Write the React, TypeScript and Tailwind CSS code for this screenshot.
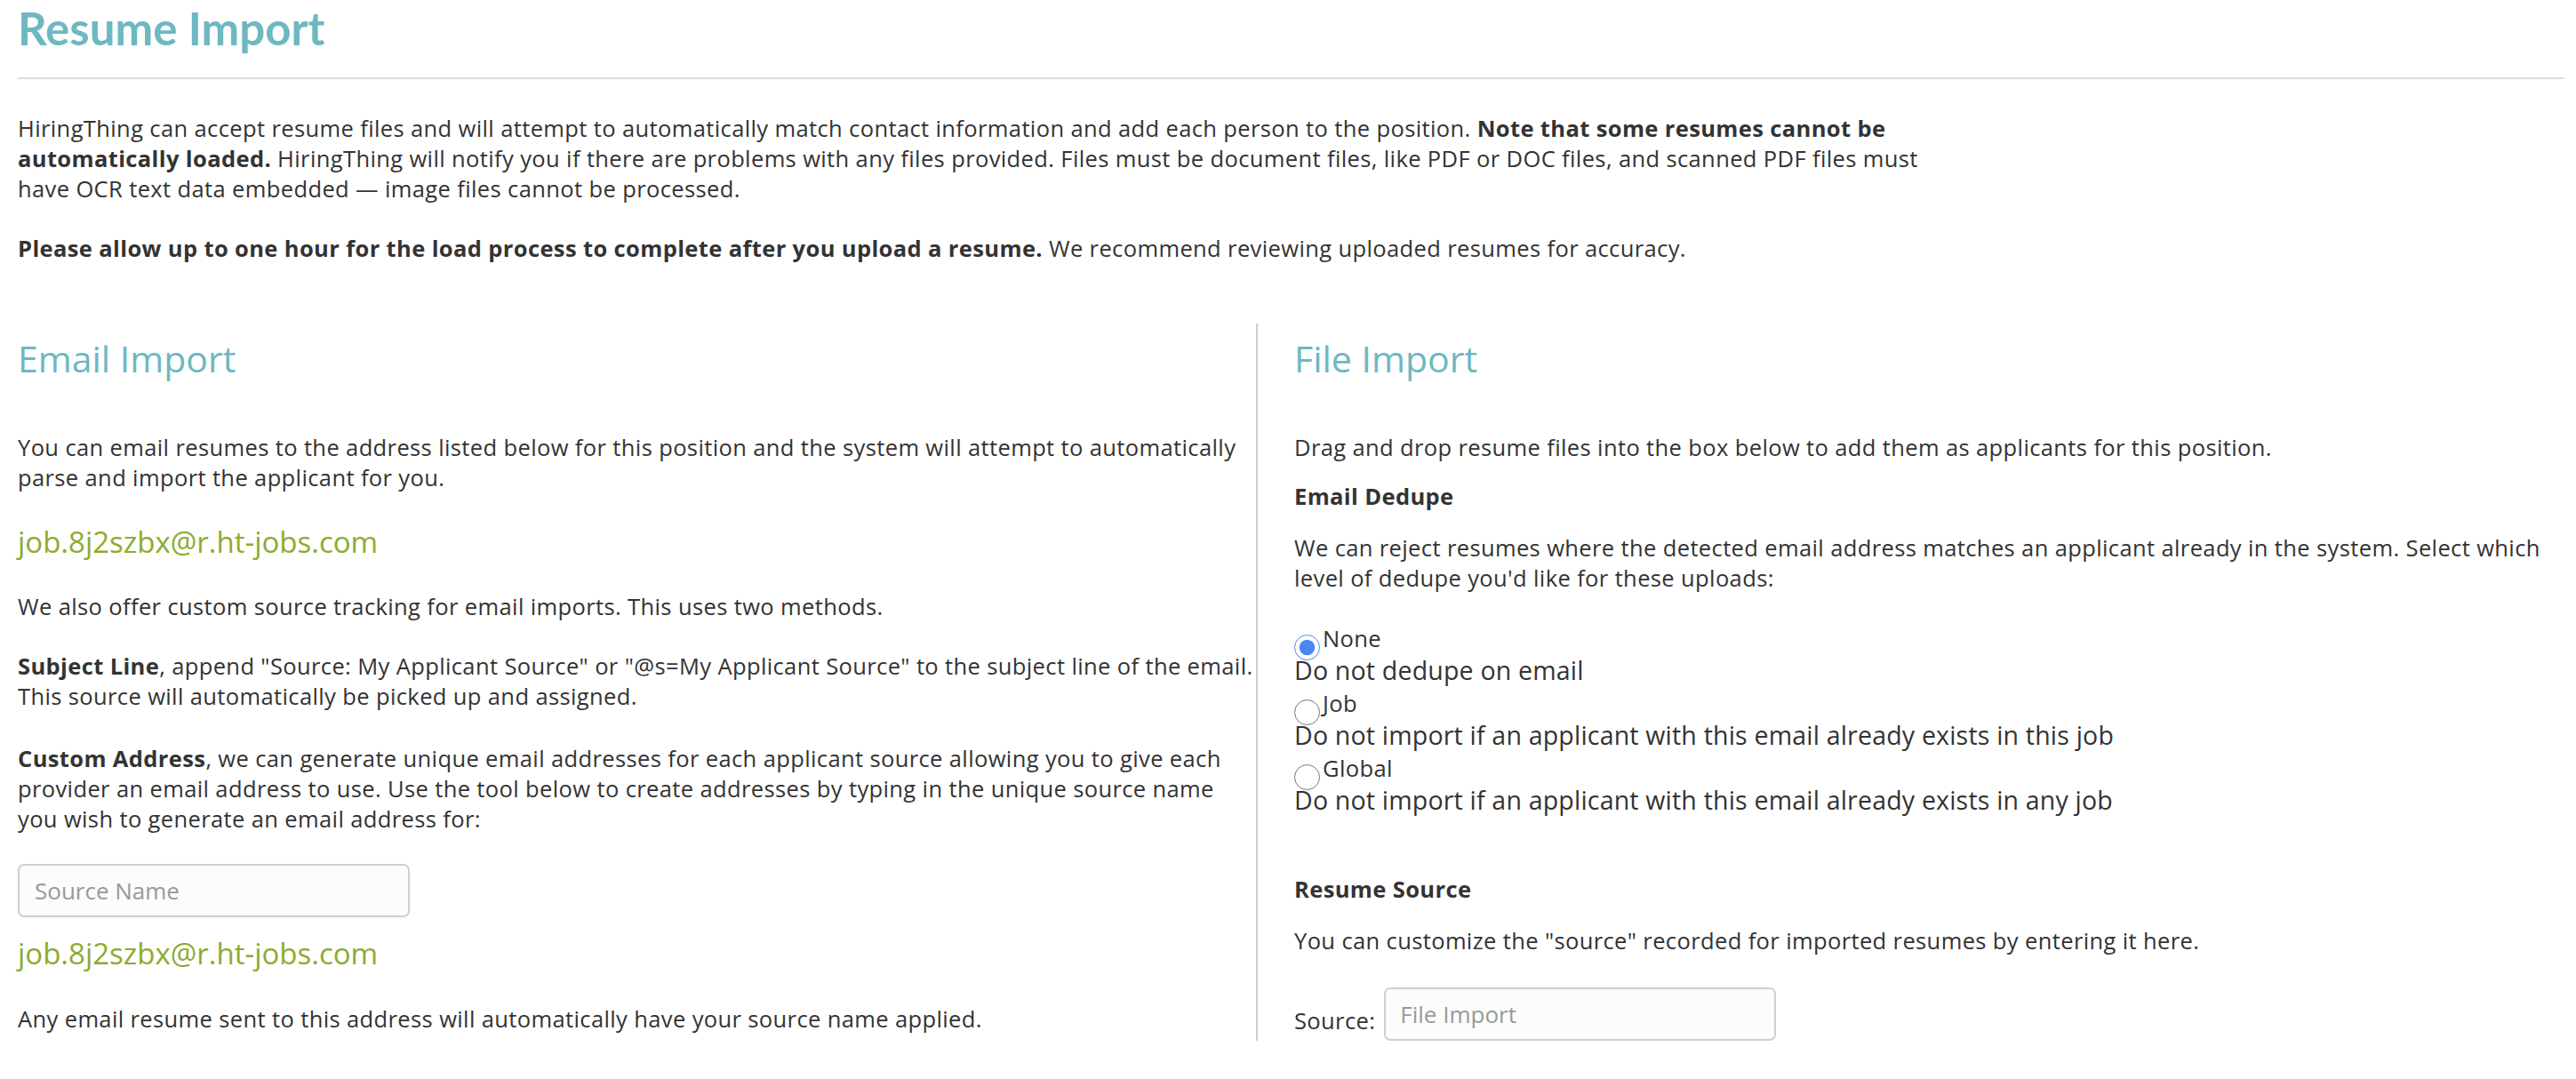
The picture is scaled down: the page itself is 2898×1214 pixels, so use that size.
import React from 'react';

const body = { fontFamily: '"Open Sans", "Liberation Sans", sans-serif' };
const title = { fontFamily: 'Lato, "Open Sans", sans-serif' };

const dedupeOptions = [
  { id: 'none', label: 'None', desc: 'Do not dedupe on email', checked: true },
  { id: 'job', label: 'Job', desc: 'Do not import if an applicant with this email already exists in this job', checked: false },
  { id: 'global', label: 'Global', desc: 'Do not import if an applicant with this email already exists in any job', checked: false },
];

const EmailImport: React.FC = () => (
  <div className="w-[1393px] shrink-0 pt-[11px]">
    <h3 className="text-[41px] leading-[56px] tracking-normal text-[#6db8c1] font-normal">Email Import</h3>
    <p className="mt-[55px]">
      You can email resumes to the address listed below for this position and the system will attempt to automatically
      parse and import the applicant for you.
    </p>
    <div className="mt-[35px] text-[33px] leading-[42px] tracking-normal text-[#8bac2f]">job.8j2szbx@r.ht-jobs.com</div>
    <p className="mt-[34px]">We also offer custom source tracking for email imports. This uses two methods.</p>
    <p className="mt-[33px]">
      <b className="font-bold">Subject Line</b>, append "Source: My Applicant Source" or "@s=My Applicant Source" to the subject line of the email.
      This source will automatically be picked up and assigned.
    </p>
    <p className="mt-[36px]">
      <b className="font-bold">Custom Address</b>, we can generate unique email addresses for each applicant source allowing you to give each
      provider an email address to use. Use the tool below to create addresses by typing in the unique source name
      you wish to generate an email address for:
    </p>
    <input
      type="text"
      placeholder="Source Name"
      className="mt-[34px] block w-[441px] h-[60px] px-[17px] border-2 border-[#cfcfcf] rounded-[7px] bg-[#fcfcfc] text-[26px] tracking-normal placeholder:text-[#999] outline-none"
      style={body}
    />
    <div className="mt-[20px] text-[33px] leading-[42px] tracking-normal text-[#8bac2f]">job.8j2szbx@r.ht-jobs.com</div>
    <p className="mt-[35px]">Any email resume sent to this address will automatically have your source name applied.</p>
  </div>
);

const FileImport: React.FC = () => (
  <div className="flex-1 border-l-2 border-[#cccccc] pl-[41px] pt-[11px] pr-[8px]">
    <h3 className="text-[41px] leading-[56px] tracking-normal text-[#6db8c1] font-normal">File Import</h3>
    <p className="mt-[55px]">Drag and drop resume files into the box below to add them as applicants for this position.</p>
    <div className="mt-[21px] font-bold">Email Dedupe</div>
    <p className="mt-[24px]">
      We can reject resumes where the detected email address matches an applicant already in the system. Select which
      level of dedupe you'd like for these uploads:
    </p>
    <div className="mt-[34px] flex flex-col gap-[1px]">
      {dedupeOptions.map(o => (
        <div key={o.id}>
          <label className="flex items-start h-[35px] gap-[3px]">
            <input
              type="radio"
              name="dedupe"
              defaultChecked={o.checked}
              className="mt-[13px] w-[29px] h-[29px] shrink-0 accent-[#4a88f0]"
            />
            <span>{o.label}</span>
          </label>
          <div className="text-[28.5px] leading-[37px] tracking-[0.2px]">{o.desc}</div>
        </div>
      ))}
    </div>
    <div className="mt-[64px] font-bold">Resume Source</div>
    <p className="mt-[24px]">You can customize the "source" recorded for imported resumes by entering it here.</p>
    <div className="mt-[36px] flex items-start">
      <span className="mt-[20px]">Source:</span>
      <input
        type="text"
        placeholder="File Import"
        className="ml-[10px] w-[441px] h-[60px] px-[16px] border-2 border-[#cfcfcf] rounded-[7px] bg-[#fcfcfc] text-[26px] tracking-normal placeholder:text-[#999] outline-none"
        style={body}
      />
    </div>
  </div>
);

const App: React.FC = () => {
  return (
    <div className="min-h-screen bg-white text-[#333] text-[25.5px] leading-[34px] tracking-[0.38px] pl-[20px] pr-[13px] pb-[60px]" style={body}>
      <h2 className="pt-[1px] text-[51px] leading-[62px] tracking-normal font-bold text-[#6db8c1]" style={title}>Resume Import</h2>
      <hr className="mt-[24px] border-0 border-t-2 border-[#dddddd]" />
      <div className="max-w-[2180px] mt-[38px]">
        <p>
          HiringThing can accept resume files and will attempt to automatically match contact information and add each person to the position.{' '}
          <b className="font-bold">Note that some resumes cannot be automatically loaded.</b> HiringThing will notify you if there are problems with any files provided.
          Files must be document files, like PDF or DOC files, and scanned PDF files must have OCR text data embedded — image files cannot be processed.
        </p>
        <p className="mt-[33px]">
          <b className="font-bold">Please allow up to one hour for the load process to complete after you upload a resume.</b> We recommend reviewing uploaded resumes for accuracy.
        </p>
      </div>
      <div className="mt-[68px] flex">
        <EmailImport />
        <FileImport />
      </div>
    </div>
  );
};

export default App;
